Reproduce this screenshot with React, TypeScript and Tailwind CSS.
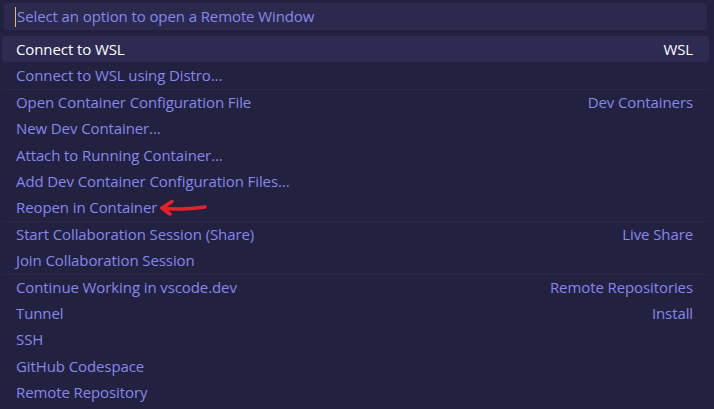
import React from "react";

type Item = { label: string; detail?: string; sep?: boolean; arrow?: boolean };

const items: Item[] = [
  { label: "Connect to WSL", detail: "WSL" },
  { label: "Connect to WSL using Distro..." },
  { label: "Open Container Configuration File", detail: "Dev Containers", sep: true },
  { label: "New Dev Container..." },
  { label: "Attach to Running Container..." },
  { label: "Add Dev Container Configuration Files..." },
  { label: "Reopen in Container", arrow: true },
  { label: "Start Collaboration Session (Share)", detail: "Live Share", sep: true },
  { label: "Join Collaboration Session" },
  { label: "Continue Working in vscode.dev", detail: "Remote Repositories", sep: true },
  { label: "Tunnel", detail: "Install" },
  { label: "SSH" },
  { label: "GitHub Codespace" },
  { label: "Remote Repository" },
];

export default function App() {
  return (
    <div
      className="w-[714px] h-[409px] overflow-hidden bg-[#222140] text-[15px]"
      style={{ fontFamily: '"Open Sans", "Noto Sans", sans-serif' }}
    >
      <div className="pt-[3px] px-[4px] pr-[7px]">
        <div className="h-[27px] bg-[#2b2a4e] rounded-[3px] flex items-center pl-[11px]">
          <span className="w-px h-[20px] bg-[#e8c14a] mr-px" />
          <span className="text-[#8787ec] tracking-[-0.1px]">Select an option to open a Remote Window</span>
        </div>
      </div>
      <div className="mt-[6px] px-[2px] pr-[5px]">
        {items.map((it, i) => (
          <Row key={i} item={it} selected={i === 0} />
        ))}
      </div>
    </div>
  );
}

function Row({ item, selected }: { item: Item; selected: boolean }) {
  return (
    <div
      className={
        "relative h-[26.4px] flex items-center justify-between pl-[14px] pr-[16px] " +
        (selected ? "bg-[#2d2b52] rounded-[3px] text-white" : "text-[#8787ec]") +
        (item.sep ? " border-t border-[#292847]" : "")
      }
    >
      <span className="tracking-[-0.1px] flex items-center">
        {item.label}
        {item.arrow && <Arrow />}
      </span>
      {item.detail && <span className="tracking-[-0.1px]">{item.detail}</span>}
    </div>
  );
}

function Arrow() {
  return (
    <svg width="50" height="18" viewBox="0 0 50 18" className="ml-[2px]">
      <path
        d="M3 9 C 15 11, 30 10, 46 8"
        stroke="#e8202a"
        strokeWidth="3.5"
        fill="none"
        strokeLinecap="round"
      />
      <path
        d="M13 2.5 L 3 9 L 11 15"
        stroke="#e8202a"
        strokeWidth="3.5"
        fill="none"
        strokeLinecap="round"
        strokeLinejoin="round"
      />
    </svg>
  );
}
